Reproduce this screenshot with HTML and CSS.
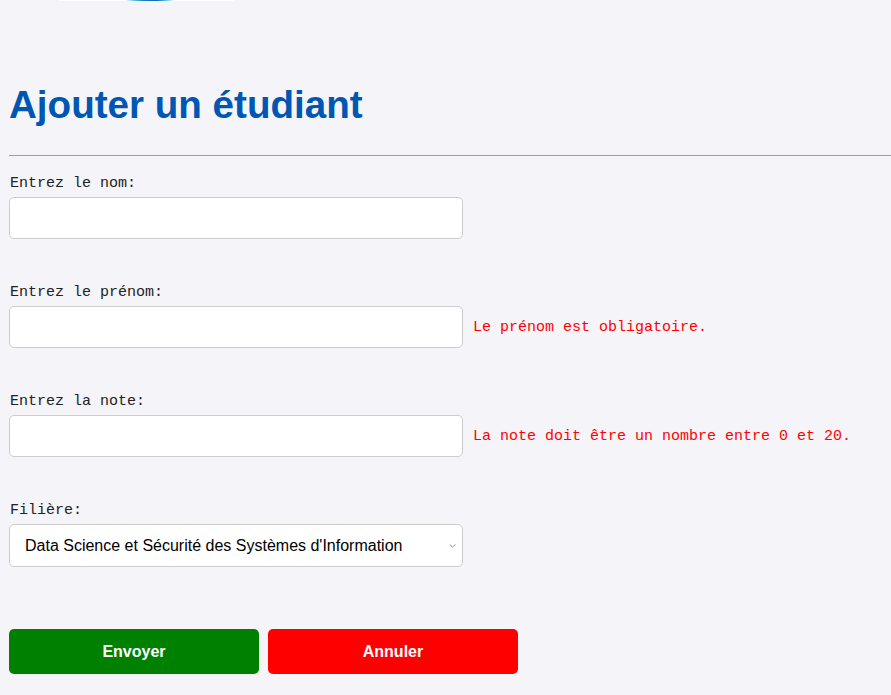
FILE: index.html
```html
<!DOCTYPE html>
<html lang="fr">
<head>
<meta charset="utf-8">
<title>Ajouter un étudiant</title>
<link rel="stylesheet" href="styles.css">
</head>
<body>
<div class="logo-strip"></div>
<div class="page">
  <h1 class="title">Ajouter un étudiant</h1>
  <hr class="sep">
  <form class="form">
    <div class="field">
      <label class="label" for="nom">Entrez le nom:</label>
      <div class="row">
        <input class="input" id="nom" type="text">
      </div>
    </div>
    <div class="field">
      <label class="label" for="prenom">Entrez le prénom:</label>
      <div class="row">
        <input class="input" id="prenom" type="text">
        <span class="error">Le prénom est obligatoire.</span>
      </div>
    </div>
    <div class="field">
      <label class="label" for="note">Entrez la note:</label>
      <div class="row">
        <input class="input" id="note" type="text">
        <span class="error">La note doit être un nombre entre 0 et 20.</span>
      </div>
    </div>
    <div class="field field-last">
      <label class="label" for="filiere">Filière:</label>
      <div class="row">
        <select class="input select" id="filiere">
          <option>Data Science et Sécurité des Systèmes d'Information</option>
        </select>
      </div>
    </div>
    <div class="actions">
      <button type="button" class="btn btn-send">Envoyer</button>
      <button type="button" class="btn btn-cancel">Annuler</button>
    </div>
  </form>
</div>
</body>
</html>
```
FILE: styles.css
```css
html, body {
  margin: 0;
  padding: 0;
  background: #f4f4f9;
}
body {
  font-family: "Liberation Sans", Arial, sans-serif;
  overflow: hidden;
}
.logo-strip {
  margin-left: 59px;
  width: 175px;
  height: 1px;
  background: linear-gradient(to right, #ffffff 0%, #ffffff 38%, #7fd0ea 42%, #1a7fc4 48%, #0a6fb8 56%, #7fd0ea 62%, #ffffff 66%, #ffffff 100%);
}
.page {
  padding-left: 9px;
}
.title {
  margin: 81px 0 0 0;
  font-size: 38.6px;
  line-height: 45px;
  font-weight: bold;
  color: #0056b3;
}
.sep {
  margin: 28px 0 0 0;
  border: 0;
  border-top: 1px solid #a0a0a0;
  height: 0;
}
.form {
  display: flex;
  flex-direction: column;
  padding-top: 19px;
}
.field {
  display: flex;
  flex-direction: column;
  gap: 4px;
  margin-bottom: 45px;
}
.field-last {
  margin-bottom: 62px;
}
.label {
  font-family: "Liberation Mono", "Courier New", monospace;
  font-size: 15px;
  line-height: 18px;
  color: #222;
  padding-left: 1px;
}
.row {
  display: flex;
  align-items: center;
  gap: 10px;
}
.input {
  box-sizing: border-box;
  width: 454px;
  height: 42px;
  border: 1px solid #cccccc;
  border-radius: 5px;
  background: #ffffff;
  padding: 0 15px;
  font-family: "Liberation Sans", Arial, sans-serif;
  font-size: 16px;
  color: #000;
  margin: 0;
}
.select {
  height: 43px;
  appearance: none;
  -webkit-appearance: none;
  background-image: url("data:image/svg+xml;utf8,<svg xmlns='http://www.w3.org/2000/svg' width='8' height='5' viewBox='0 0 8 5'><path d='M0.5 0.5 L4 4 L7.5 0.5' fill='none' stroke='%23888' stroke-width='1.1'/></svg>");
  background-repeat: no-repeat;
  background-position: right 6px center;
  background-size: 7px 4px;
}
.error {
  font-family: "Liberation Mono", "Courier New", monospace;
  font-size: 15px;
  line-height: 18px;
  color: #ff0000;
  padding-top: 2px;
}
.actions {
  display: flex;
  gap: 9px;
}
.btn {
  width: 250px;
  height: 45px;
  border: 0;
  border-radius: 5px;
  color: #ffffff;
  font-family: "Liberation Sans", Arial, sans-serif;
  font-size: 16px;
  font-weight: bold;
  cursor: pointer;
  margin: 0;
}
.btn-send {
  background: #008000;
}
.btn-cancel {
  background: #ff0000;
}
```
